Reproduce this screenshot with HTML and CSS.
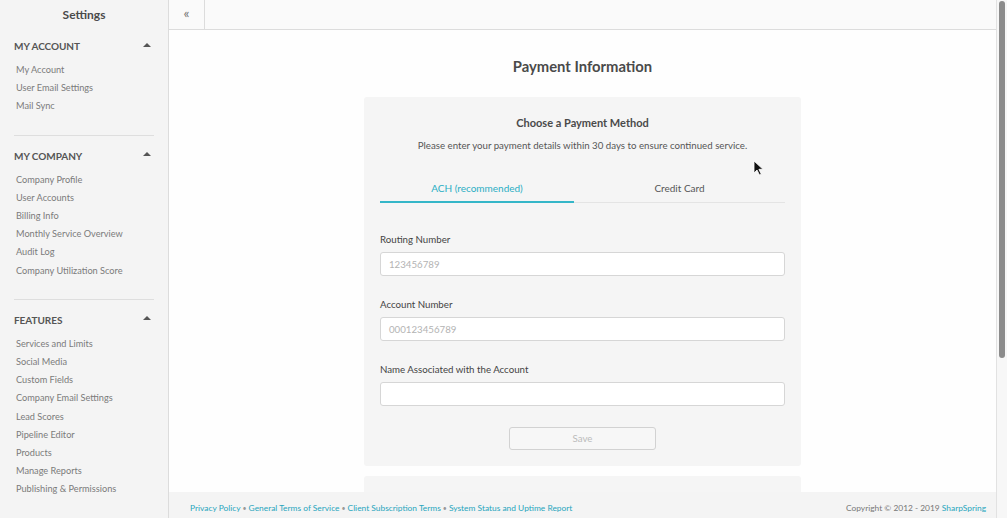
FILE: index.html
```html
<!DOCTYPE html>
<html>
<head>
<meta charset="utf-8">
<link rel="stylesheet" href="styles.css">
</head>
<body>
<div class="page">
  <aside class="sidebar">
    <div class="side-title">Settings</div>
    <section class="side-section first">
      <div class="side-head"><span>MY ACCOUNT</span><span class="caret"></span></div>
      <ul class="side-list">
        <li>My Account</li>
        <li>User Email Settings</li>
        <li>Mail Sync</li>
      </ul>
    </section>
    <section class="side-section">
      <div class="side-head"><span>MY COMPANY</span><span class="caret"></span></div>
      <ul class="side-list">
        <li>Company Profile</li>
        <li>User Accounts</li>
        <li>Billing Info</li>
        <li>Monthly Service Overview</li>
        <li>Audit Log</li>
        <li>Company Utilization Score</li>
      </ul>
    </section>
    <section class="side-section">
      <div class="side-head"><span>FEATURES</span><span class="caret"></span></div>
      <ul class="side-list">
        <li>Services and Limits</li>
        <li>Social Media</li>
        <li>Custom Fields</li>
        <li>Company Email Settings</li>
        <li>Lead Scores</li>
        <li>Pipeline Editor</li>
        <li>Products</li>
        <li>Manage Reports</li>
        <li>Publishing &amp; Permissions</li>
      </ul>
    </section>
  </aside>
  <div class="main">
    <div class="topbar">
      <div class="collapse-btn">«</div>
    </div>
    <div class="content">
      <h1 class="page-title">Payment Information</h1>
      <div class="card">
        <h2 class="card-title">Choose a Payment Method</h2>
        <p class="card-sub">Please enter your payment details within 30 days to ensure continued service.</p>
        <div class="tabs">
          <div class="tab tab-ach active">ACH (recommended)</div>
          <div class="tab tab-cc">Credit Card</div>
        </div>
        <div class="field">
          <label class="label">Routing Number</label>
          <div class="input placeholder">123456789</div>
        </div>
        <div class="field">
          <label class="label">Account Number</label>
          <div class="input placeholder">000123456789</div>
        </div>
        <div class="field">
          <label class="label">Name Associated with the Account</label>
          <div class="input"></div>
        </div>
        <div class="actions">
          <div class="btn">Save</div>
        </div>
      </div>
      <div class="card card-next"></div>
    </div>
    <footer class="footer">
      <div class="links">
        <a>Privacy Policy</a><span class="dot">•</span><a>General Terms of Service</a><span class="dot">•</span><a>Client Subscription Terms</a><span class="dot">•</span><a>System Status and Uptime Report</a>
      </div>
      <div class="copy">Copyright © 2012 - 2019 <a>SharpSpring</a></div>
    </footer>
  </div>
  <div class="scrollbar"><div class="thumb"></div></div>
</div>
<svg class="cursor" width="11" height="16" viewBox="0 0 11 16"><path d="M1 1 L1 13 L4 10 L6.5 15 L8.3 14.2 L5.9 9.3 L10 9.3 Z" fill="#111" stroke="#fff" stroke-width="0.8"/></svg>
</body>
</html>
```
FILE: styles.css
```css
* { box-sizing: border-box; }
html, body { margin: 0; padding: 0; }
body {
  font-family: Lato, "Open Sans", Arial, sans-serif;
  color: #4a4a4a;
  background: #fff;
  width: 1007px;
  height: 518px;
  overflow: hidden;
}
.page {
  display: flex;
  height: 518px;
}
.sidebar {
  width: 169px;
  flex: none;
  background: #f4f4f4;
  border-right: 1px solid #dcdcdc;
  padding: 0 14px;
}
.side-title {
  text-align: center;
  font-size: 12px;
  font-weight: 700;
  color: #4a4a4a;
  line-height: 14px;
  padding: 8px 0 3px;
}
.side-section {
  border-top: 1px solid #dedede;
  padding: 13px 0 19px;
}
.side-section.first {
  border-top: none;
  padding-top: 14px;
}
.side-head {
  display: flex;
  justify-content: space-between;
  align-items: center;
  font-size: 10px;
  font-weight: 700;
  color: #555;
  line-height: 14px;
  letter-spacing: -0.05px;
}
.caret {
  width: 0;
  height: 0;
  border-left: 4px solid transparent;
  border-right: 4px solid transparent;
  border-bottom: 4px solid #555;
  margin-right: 3px;
  margin-top: -3px;
}
.side-list {
  list-style: none;
  margin: 8px 0 0;
  padding: 0 0 0 2px;
}
.side-list li {
  font-size: 9.2px;
  line-height: 18.2px;
  color: #7b7b7b;
}
.main {
  flex: 1;
  display: flex;
  flex-direction: column;
  min-width: 0;
  background: #fefefe;
}
.topbar {
  height: 30px;
  flex: none;
  display: flex;
  background: #fafafa;
  border-bottom: 1px solid #dcdcdc;
}
.collapse-btn {
  width: 36px;
  border-right: 1px solid #dcdcdc;
  text-align: center;
  font-size: 14px;
  line-height: 26px;
  color: #777;
}
.content {
  flex: 1;
  overflow: hidden;
  display: flex;
  flex-direction: column;
  align-items: center;
}
.page-title {
  margin: 28px 0 0;
  font-size: 14.8px;
  font-weight: 700;
  line-height: 16px;
  color: #4a4a4a;
}
.card {
  width: 437px;
  background: #f5f5f5;
  border-radius: 3px;
  margin-top: 23px;
  padding: 19px 16px 16px;
  flex: none;
}
.card-next {
  margin-top: 10px;
  height: 40px;
  padding: 0;
}
.card-title {
  margin: 0;
  text-align: center;
  font-size: 11px;
  font-weight: 700;
  line-height: 14px;
  color: #4a4a4a;
}
.card-sub {
  margin: 8px 0 0;
  text-align: center;
  font-size: 9.7px;
  line-height: 14px;
  color: #555;
}
.tabs {
  display: flex;
  margin-top: 27px;
  border-bottom: 1px solid #e4e4e4;
}
.tab {
  text-align: center;
  font-size: 10px;
  line-height: 14px;
  padding: 2px 0 6px;
  color: #555;
  border-bottom: 2px solid transparent;
  margin-bottom: -1px;
}
.tab-ach { width: 194px; }
.tab-cc { flex: 1; }
.tab.active {
  color: #2aaec4;
  border-bottom-color: #35b6c8;
}
.field { margin-top: 29px; }
.field + .field { margin-top: 21px; }
.label {
  display: block;
  font-size: 9.7px;
  line-height: 14px;
  color: #444;
}
.input {
  margin-top: 6px;
  height: 24px;
  background: #fff;
  border: 1px solid #d6d6d6;
  border-radius: 3px;
  font-size: 9.7px;
  line-height: 22px;
  padding: 0 8px;
  color: #444;
}
.input.placeholder { color: #b3b3b3; }
.actions {
  display: flex;
  justify-content: center;
  margin-top: 21px;
}
.btn {
  width: 147px;
  height: 23px;
  border: 1px solid #d2d2d2;
  border-radius: 3px;
  background: #f7f7f7;
  text-align: center;
  font-size: 9.7px;
  line-height: 21px;
  color: #bbb;
}
.footer {
  height: 26px;
  flex: none;
  background: #f4f4f4;
  display: flex;
  justify-content: space-between;
  padding: 10px 10px 0 21px;
  font-size: 8.4px;
  line-height: 12px;
  color: #777;
}
.footer a { color: #27a5bd; }
.dot { color: #999; margin: 0 2px; font-size: 7px; }
.scrollbar {
  width: 11px;
  flex: none;
  background: #f7f7f7;
  border-left: 1px solid #e2e2e2;
  padding: 1px 2px 0 2px;
}
.thumb {
  width: 6px;
  height: 357px;
  background: #8c8c8c;
  border-radius: 3px;
}
.cursor {
  position: absolute;
  left: 753px;
  top: 160px;
}
```
